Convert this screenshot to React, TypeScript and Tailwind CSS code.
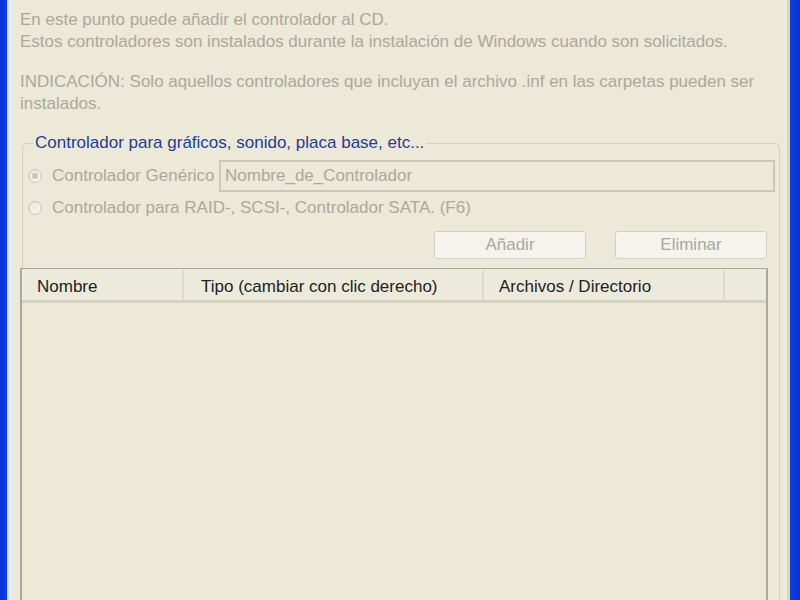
import React from "react";

export default function App() {
  const font = { fontFamily: '"Liberation Sans", Arial, sans-serif' };
  return (
    <div className="w-[800px] h-[600px] overflow-hidden flex bg-[#ECE9D8]" style={font}>
      {/* left window frame */}
      <div className="w-[7px] h-full bg-gradient-to-r from-[#0831D9] to-[#0A3FE0]" />
      <div className="w-[4px] h-full bg-gradient-to-r from-[#C9D6F5] to-[#F4F6FA]" />
      {/* content */}
      <div className="w-[776px] flex flex-col pt-[9px] text-[17px] leading-[22px]">
        <div className="text-[#ACA899] pl-[9px]">
          <p>En este punto puede añadir el controlador al CD.</p>
          <p>Estos controladores son instalados durante la instalación de Windows cuando son solicitados.</p>
          <p className="mt-[18px]">INDICACIÓN: Solo aquellos controladores que incluyan el archivo .inf en las carpetas pueden ser</p>
          <p>instalados.</p>
        </div>

        {/* group box */}
        <div className="relative mt-[28px] ml-[11px] w-[758px] h-[600px] border border-[#D0D0BF] rounded-[5px]">
          <div className="absolute -top-[12px] left-[10px] px-[2px] bg-[#ECE9D8] text-[#1E3C9A] leading-[22px]">
            Controlador para gráficos, sonido, placa base, etc...
          </div>
          <div className="pt-[16px] pl-[5px] pr-[4px] flex flex-col">
            <div className="flex items-center h-[32px]">
              <div className="w-[14px] h-[14px] rounded-full border border-[#C4C2B5] bg-gradient-to-br from-[#E6E4DA] to-[#F6F5F0] flex items-center justify-center">
                <div className="w-[6px] h-[6px] rounded-full bg-[#CAC8BB]" />
              </div>
              <span className="ml-[10px] w-[167px] text-[#ACA899] whitespace-nowrap">Controlador Genérico</span>
              <div className="flex-1 h-[32px] border-2 border-[#C9C7BA] bg-[#ECE9D8] flex items-center pl-[4px] text-[#ACA899]">
                Nombre_de_Controlador
              </div>
            </div>
            <div className="flex items-center h-[32px]">
              <div className="w-[14px] h-[14px] rounded-full border border-[#C4C2B5] bg-gradient-to-br from-[#E6E4DA] to-[#F6F5F0]" />
              <span className="ml-[10px] text-[#ACA899]">Controlador para RAID-, SCSI-, Controlador SATA. (F6)</span>
            </div>
            <div className="flex justify-end gap-[29px] mt-[7px] pr-[8px]">
              <div className="w-[152px] h-[28px] rounded-[3px] border border-[#D3D1C5] bg-[#F4F3EE] flex items-center justify-center text-[#ACA899]">
                Añadir
              </div>
              <div className="w-[152px] h-[28px] rounded-[3px] border border-[#D3D1C5] bg-[#F4F3EE] flex items-center justify-center text-[#ACA899]">
                Eliminar
              </div>
            </div>
          </div>
          {/* list */}
          <div className="-ml-[3px] mr-[11px] mt-[9px] h-[400px] border border-[#A5A9A0] border-l-[2px] border-r-[2px] bg-[#ECE9D8] pt-[1px]">
            <div className="flex h-[33px] items-center bg-[#EBEADB] border-b-[3px] border-[#D6D2C2] text-[#222222]">
              <div className="w-[162px] pl-[15px] pt-[4px] h-full flex items-center border-r-2 border-[#DEDACB]">Nombre</div>
              <div className="w-[300px] pl-[17px] pt-[4px] h-full flex items-center border-r-2 border-[#DEDACB]">Tipo (cambiar con clic derecho)</div>
              <div className="w-[241px] pl-[15px] pt-[4px] h-full flex items-center border-r-2 border-[#DEDACB]">Archivos / Directorio</div>
              <div className="flex-1" />
            </div>
          </div>
        </div>
      </div>
      {/* right window frame */}
      <div className="w-[3px] h-full bg-[#D8D6CC]" />
      <div className="w-[10px] h-full bg-gradient-to-r from-[#0A3FE0] to-[#0831D9]" />
    </div>
  );
}
